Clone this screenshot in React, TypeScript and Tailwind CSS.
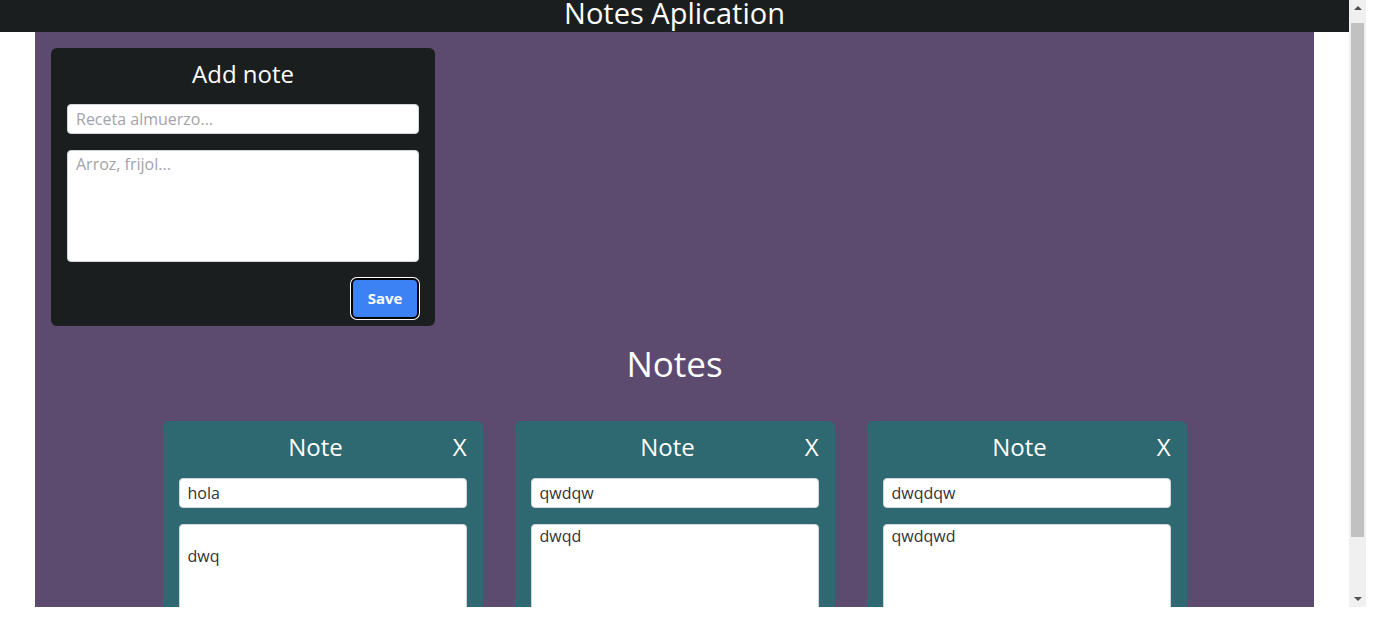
import React from "react";

const font = { fontFamily: '"Open Sans", "Noto Sans", Arial, sans-serif' };

interface NoteProps {
  title: string;
  body: string;
}

function NoteCard({ title, body }: NoteProps) {
  return (
    <div className="w-[320px] rounded-md bg-[#2e6870] px-4 pt-2 pb-4">
      <div className="flex items-center text-white">
        <h3 className="flex-1 text-center text-[24px] leading-[36px]">Note</h3>
        <button className="text-[24px] leading-[36px] text-white">X</button>
      </div>
      <input
        defaultValue={title}
        className="mt-[13px] block h-[30px] w-full rounded border border-gray-300 bg-white px-2 text-[16px] text-[#333] outline-none"
      />
      <textarea
        defaultValue={body}
        className="mt-4 block h-[112px] w-full resize-none rounded border border-gray-300 bg-white px-2 py-px text-[16px] leading-5 text-[#333] outline-none"
      />
    </div>
  );
}

export default function App() {
  const notes = [
    { title: "hola", body: "\ndwq" },
    { title: "qwdqw", body: "dwqd" },
    { title: "dwqdqw", body: "qwdqwd" },
  ];

  return (
    <div className="h-[620px] w-[1376px] bg-white" style={font}>
      <div className="flex h-[607px]">
        {/* page */}
        <div className="flex w-[1349px] flex-col overflow-hidden">
          <header className="h-8 shrink-0 overflow-hidden bg-[#1b1e1e] text-center">
            <h1 className="-mt-[9px] text-[29px] leading-[44px] text-white">Notes Aplication</h1>
          </header>
          <main className="mx-[35px] flex-1 overflow-hidden bg-[#5c4b6e] p-4">
            <div className="w-[384px] rounded-md bg-[#1b1e1e] px-4 pt-2 pb-[7px]">
              <h2 className="text-center text-[24px] leading-[36px] text-white">Add note</h2>
              <input
                placeholder="Receta almuerzo..."
                className="mt-3 block h-[30px] w-full rounded border border-gray-300 bg-white px-2 text-[16px] text-[#333] outline-none placeholder:text-[#a3a3ab]"
              />
              <textarea
                placeholder="Arroz, frijol..."
                className="mt-4 block h-[112px] w-full resize-none rounded border border-gray-300 bg-white px-2 py-px text-[16px] leading-6 text-[#333] outline-none placeholder:text-[#a3a3ab]"
              />
              <div className="mt-[16px] flex justify-end">
                <button className="h-[41px] w-[68px] rounded-md border-2 border-black bg-[#3d82f4] text-[15px] font-bold text-white ring-1 ring-white">
                  Save
                </button>
              </div>
            </div>
            <h2 className="mt-[11px] text-center text-[35px] leading-[54px] text-white">Notes</h2>
            <div className="mt-[30px] flex justify-center gap-8">
              {notes.map((n, i) => (
                <NoteCard key={i} title={n.title} body={n.body} />
              ))}
            </div>
          </main>
        </div>
        {/* scrollbar */}
        <div className="flex w-[17px] flex-col items-center bg-[#f0f0f0]">
          <div className="mt-[6px] h-0 w-0 border-x-[4px] border-b-[4px] border-x-transparent border-b-[#505050]" />
          <div className="mt-[13px] h-[514px] w-[13px] bg-[#c1c1c1]" />
          <div className="mt-auto mb-[6px] h-0 w-0 border-x-[4px] border-t-[4px] border-x-transparent border-t-[#505050]" />
        </div>
      </div>
    </div>
  );
}
